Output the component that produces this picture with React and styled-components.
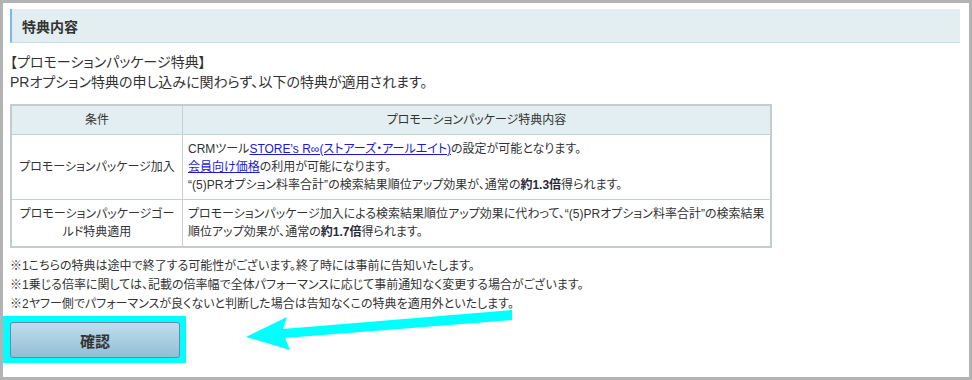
import React from "react";
import styled, { createGlobalStyle } from "styled-components";

const Global = createGlobalStyle`
  html, body { margin: 0; padding: 0; }
  body {
    background: #b3b3b3;
    font-family: "Liberation Sans", "Noto Sans CJK JP", sans-serif;
    font-feature-settings: "palt";
    color: #333;
  }
`;

const Frame = styled.div`
  position: relative;
  margin: 3px;
  width: 966px;
  height: 374px;
  background: #fff;
  box-sizing: border-box;
  padding: 6px 9px 0 7px;
`;

const SectionHeader = styled.h2`
  margin: 0;
  height: 33px;
  display: flex;
  align-items: center;
  padding-left: 10px;
  background: #e2eef0;
  border-left: 2px solid #7db6ef;
  border-bottom: 1px solid #c6e2e2;
  font-size: 14px;
  font-weight: bold;
  color: #333;
`;

const Lead = styled.p`
  margin: 9px 0 0;
  font-size: 14px;
  line-height: 20px;
`;

const Table = styled.table`
  margin-top: 12px;
  width: 762px;
  border-collapse: collapse;
  border: 2px solid #c5cccc;
  font-size: 12px;
  line-height: 18px;
`;

const Th = styled.th`
  background: #e2eef0;
  font-weight: normal;
  text-align: center;
  padding: 5px;
  border: 1px solid #c8d0d0;
  width: ${(p) => p.$w || "auto"};
`;

const Td = styled.td`
  padding: 5px;
  border: 1px solid #c8d0d0;
  text-align: ${(p) => (p.$center ? "center" : "left")};
  vertical-align: middle;
`;

const Link = styled.a`
  color: #1a1ad6;
  text-decoration: underline;
`;

const Strong = styled.b`
  font-weight: bold;
  color: #2a2a3a;
`;

const Notes = styled.div`
  margin-top: 9px;
  font-size: 12px;
  line-height: 19px;
`;

const ButtonRow = styled.div`
  margin: 2px 0 0 -7px;
  display: flex;
`;

const Highlight = styled.div`
  display: flex;
  padding: 6px 6px 5px 7px;
  background: #00ffff;
`;

const ConfirmButton = styled.button`
  width: 170px;
  height: 36px;
  border: 1px solid #7185a8;
  border-radius: 3px;
  background: linear-gradient(#c1ddef, #92bed4);
  font-family: inherit;
  font-size: 15px;
  font-weight: bold;
  color: #333;
  cursor: pointer;
`;

const Arrow = styled.svg`
  position: absolute;
  left: 0;
  top: 0;
  pointer-events: none;
`;

export default function App() {
  return (
    <>
      <Global />
      <Frame>
        <SectionHeader>特典内容</SectionHeader>
        <Lead>
          【プロモーションパッケージ特典】
          <br />
          PRオプション特典の申し込みに関わらず、以下の特典が適用されます。
        </Lead>
        <Table>
          <thead>
            <tr>
              <Th $w="160px">条件</Th>
              <Th>プロモーションパッケージ特典内容</Th>
            </tr>
          </thead>
          <tbody>
            <tr>
              <Td $center>プロモーションパッケージ加入</Td>
              <Td>
                CRMツール<Link href="#">STORE's R∞(ストアーズ・アールエイト)</Link>の設定が可能となります。
                <br />
                <Link href="#">会員向け価格</Link>の利用が可能になります。
                <br />
                “(5)PRオプション料率合計”の検索結果順位アップ効果が、通常の<Strong>約1.3倍</Strong>得られます。
              </Td>
            </tr>
            <tr>
              <Td $center>プロモーションパッケージゴールド特典適用</Td>
              <Td>
                プロモーションパッケージ加入による検索結果順位アップ効果に代わって、“(5)PRオプション料率合計”の検索結果順位アップ効果が、通常の<Strong>約1.7倍</Strong>得られます。
              </Td>
            </tr>
          </tbody>
        </Table>
        <Notes>
          ※1こちらの特典は途中で終了する可能性がございます。終了時には事前に告知いたします。
          <br />
          ※1乗じる倍率に関しては、記載の倍率幅で全体パフォーマンスに応じて事前通知なく変更する場合がございます。
          <br />
          ※2ヤフー側でパフォーマンスが良くないと判断した場合は告知なくこの特典を適用外といたします。
        </Notes>
        <ButtonRow>
          <Highlight>
            <ConfirmButton type="button">確認</ConfirmButton>
          </Highlight>
        </ButtonRow>
        <Arrow width="966" height="374" viewBox="3 3 966 374">
          <polygon
            points="246,337 287,317 283,329 512,310 512,320 285,338 290,350"
            fill="#00ffff"
          />
        </Arrow>
      </Frame>
    </>
  );
}
